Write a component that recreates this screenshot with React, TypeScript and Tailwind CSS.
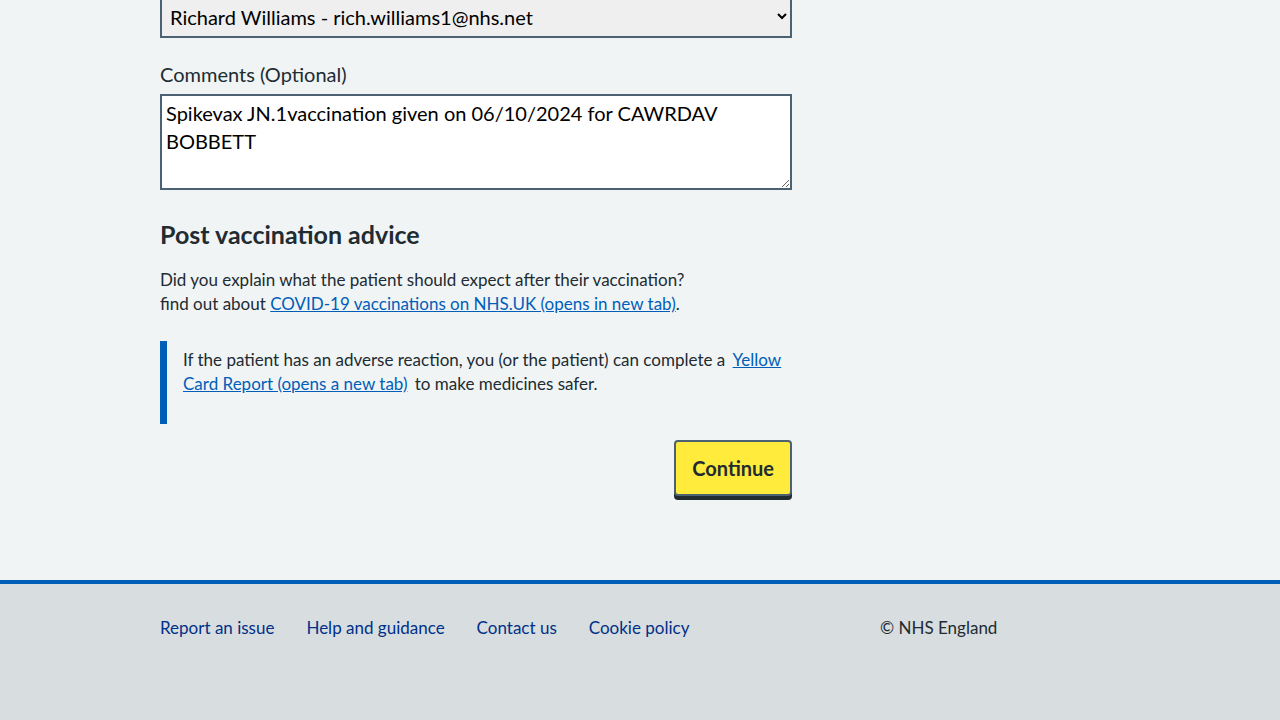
import React from "react";

export default function App() {
  return (
    <div className="min-h-[720px] bg-[#f0f4f5] text-[#212b32] overflow-hidden" style={{ fontFamily: "Lato, 'Liberation Sans', sans-serif" }}>
      <main className="mx-auto w-[960px] pb-[84px]">
        <div className="w-[632px]">
          <div className="-mt-[5px] mb-[24px]">
            <select
              className="block w-full h-[43px] border-2 border-[#4c6272] bg-[#efefef] px-[4px] text-[20px] text-black"
              defaultValue="rw"
            >
              <option value="rw">Richard Williams - rich.williams1@nhs.net</option>
            </select>
          </div>
          <label className="block text-[20px] leading-[24px] mb-[8px] text-[#212b32]">Comments (Optional)</label>
          <textarea
            className="block w-full h-[96px] border-2 border-[#4c6272] bg-white px-[4px] pt-[3px] text-[20px] leading-[28px] text-black"
            defaultValue="Spikevax JN.1vaccination given on 06/10/2024 for CAWRDAV BOBBETT"
          />
          <h2 className="mt-[28px] mb-[18px] text-[25px] leading-[32px] font-bold">Post vaccination advice</h2>
          <p className="text-[17px] leading-[24px]">
            Did you explain what the patient should expect after their vaccination?
            <br />
            find out about{" "}
            <a href="#" className="text-[#005eb8] underline">COVID-19 vaccinations on NHS.UK (opens in new tab)</a>.
          </p>
          <div className="mt-[25px] border-l-[7px] border-[#005eb8] pl-[16px] pt-[7px] pb-[28px]">
            <p className="text-[17px] leading-[24px]">
              If the patient has an adverse reaction, you (or the patient) can complete a{" "}
              <a href="#" className="ml-[3px] mr-[3px] text-[#005eb8] underline">Yellow Card Report (opens a new tab)</a>{" "}
              to make medicines safer.
            </p>
          </div>
          <div className="mt-[16px] flex justify-end">
            <button className="rounded-[4px] border-2 border-[#4c6272] bg-[#ffeb3b] px-[16px] py-[12px] text-[20px] leading-[28px] font-bold text-[#212b32] shadow-[0_4px_0_#212b32]">
              Continue
            </button>
          </div>
        </div>
      </main>
      <footer className="border-t-4 border-[#005eb8] bg-[#d8dde0] h-[200px]">
        <div className="mx-auto w-[960px] pt-[32px] flex">
          <ul className="w-[720px] flex gap-[32px] text-[17px] leading-[24px] text-[#003087]">
            <li><a href="#">Report an issue</a></li>
            <li><a href="#">Help and guidance</a></li>
            <li><a href="#">Contact us</a></li>
            <li><a href="#">Cookie policy</a></li>
          </ul>
          <p className="text-[17px] leading-[24px] text-[#212b32]">© NHS England</p>
        </div>
      </footer>
    </div>
  );
}
